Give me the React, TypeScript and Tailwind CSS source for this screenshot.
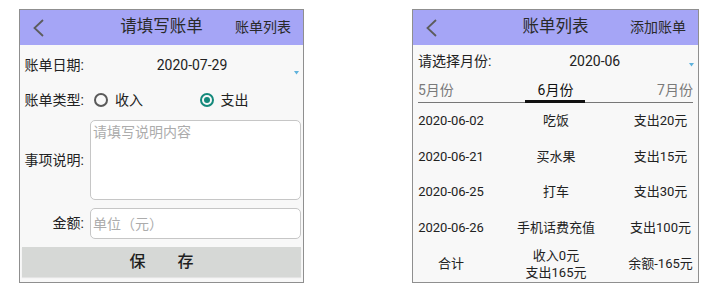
import React from 'react';

const BackIcon = () => (
  <svg width="12" height="18" viewBox="0 0 12 18" fill="none">
    <path d="M11 1L2.5 9L11 17" stroke="#5c5c5c" strokeWidth="1.8" />
  </svg>
);

const SpinnerArrow = () => (
  <svg width="5" height="4" viewBox="0 0 5 4" className="absolute right-[4px] bottom-[10px]">
    <path d="M0 0H5L2.5 3.5Z" fill="#5fb2dc" />
  </svg>
);

const Header = ({ title, action }: { title: string; action: string }) => (
  <div className="grid h-[35px] grid-cols-[1fr_auto_1fr] items-center bg-[#a5a5f6] px-[12px]">
    <div className="flex items-center">
      <BackIcon />
    </div>
    <div className="text-[16.5px] text-[#2a2a2a]">{title}</div>
    <div className="text-right text-[14px] text-[#2a2a2a]">{action}</div>
  </div>
);

const Label = ({ children }: { children: React.ReactNode }) => (
  <div className="w-[64px] shrink-0 text-right text-[14px] text-[#222]">{children}</div>
);

const Radio = ({ checked, label }: { checked?: boolean; label: string }) => (
  <div className="flex flex-1 items-center gap-[7px] pl-[4px]">
    {checked ? (
      <span className="flex h-[14px] w-[14px] items-center justify-center rounded-full border-2 border-[#14897b]">
        <span className="h-[6px] w-[6px] rounded-full bg-[#14897b]" />
      </span>
    ) : (
      <span className="h-[14px] w-[14px] rounded-full border-2 border-[#5a5a5a]" />
    )}
    <span className="text-[14px] text-[#222]">{label}</span>
  </div>
);

const BillForm = () => (
  <div className="flex h-[274px] w-[285px] flex-col border border-[#8f8f8f] bg-[#f8f8f8]">
    <Header title="请填写账单" action="账单列表" />

    <div className="flex h-[40px] items-center">
      <Label>账单日期:</Label>
      <div className="relative flex h-full flex-1 items-center justify-center pr-[3px] text-[14px] text-[#222]">
        2020-07-29
        <SpinnerArrow />
      </div>
    </div>

    <div className="flex h-[30px] items-center">
      <Label>账单类型:</Label>
      <div className="ml-[6px] mr-[2px] flex flex-1">
        <Radio label="收入" />
        <Radio checked label="支出" />
      </div>
    </div>

    <div className="mt-[5px] flex items-center">
      <Label>事项说明:</Label>
      <textarea
        readOnly
        placeholder="请填写说明内容"
        className="ml-[6px] mr-[2px] h-[80px] flex-1 resize-none rounded-[5px] border border-[#c6c6c6] bg-white px-[2px] pt-[2px] text-[14px] leading-[18px] outline-none placeholder:text-[#acacac]"
      />
    </div>

    <div className="mt-[8px] flex items-center">
      <Label>金额:</Label>
      <input
        readOnly
        placeholder="单位（元）"
        className="ml-[6px] mr-[2px] h-[31px] min-w-0 flex-1 rounded-[5px] border border-[#c6c6c6] bg-white px-[2px] text-[14px] outline-none placeholder:text-[#acacac]"
      />
    </div>

    <button className="mx-[2px] mt-[8px] h-[30px] bg-[#d6d8d6] text-[16px] font-medium text-[#1e1e1e] shadow-[0_1px_1px_rgba(0,0,0,0.08)]">
      保　　存
    </button>
  </div>
);

const bills = [
  { date: '2020-06-02', item: '吃饭', amount: '支出20元' },
  { date: '2020-06-21', item: '买水果', amount: '支出15元' },
  { date: '2020-06-25', item: '打车', amount: '支出30元' },
  { date: '2020-06-26', item: '手机话费充值', amount: '支出100元' },
];

const BillList = () => (
  <div className="flex h-[274px] w-[287px] flex-col border border-[#8f8f8f] bg-[#f8f8f8]">
    <Header title="账单列表" action="添加账单" />

    <div className="flex h-[32px] items-center pl-[5px] text-[14px] text-[#222]">
      <span>请选择月份:</span>
      <div className="relative flex h-full flex-1 items-center justify-center">
        2020-06
        <SpinnerArrow />
      </div>
    </div>

    <div className="mx-[5px] grid h-[26px] grid-cols-3 border-b border-[#777] text-[14px]">
      <div className="pt-[3px] leading-[20px] text-[#7a7a7a]">5月份</div>
      <div className="flex flex-col items-center">
        <span className="pt-[3px] leading-[20px] text-[#111]">6月份</span>
        <span className="mt-auto h-[3px] w-[60px] bg-[#111]" />
      </div>
      <div className="pt-[3px] text-right leading-[20px] text-[#7a7a7a]">7月份</div>
    </div>

    {bills.map((b) => (
      <div key={b.date} className="grid h-[35.5px] grid-cols-[76px_134px_1fr] items-center text-center text-[13px] text-[#222]">
        <span>{b.date}</span>
        <span>{b.item}</span>
        <span>{b.amount}</span>
      </div>
    ))}

    <div className="grid flex-1 grid-cols-[76px_134px_1fr] items-center text-center text-[13px] text-[#222]">
      <span>合计</span>
      <span className="leading-[17px]">
        收入0元
        <br />
        支出165元
      </span>
      <span>余额-165元</span>
    </div>
  </div>
);

export default function App() {
  return (
    <div className="flex h-[300px] w-[721px] gap-[108px] bg-white pl-[19px] pt-[9px] font-[Roboto,'Noto_Sans_CJK_SC',sans-serif]">
      <BillForm />
      <BillList />
    </div>
  );
}
